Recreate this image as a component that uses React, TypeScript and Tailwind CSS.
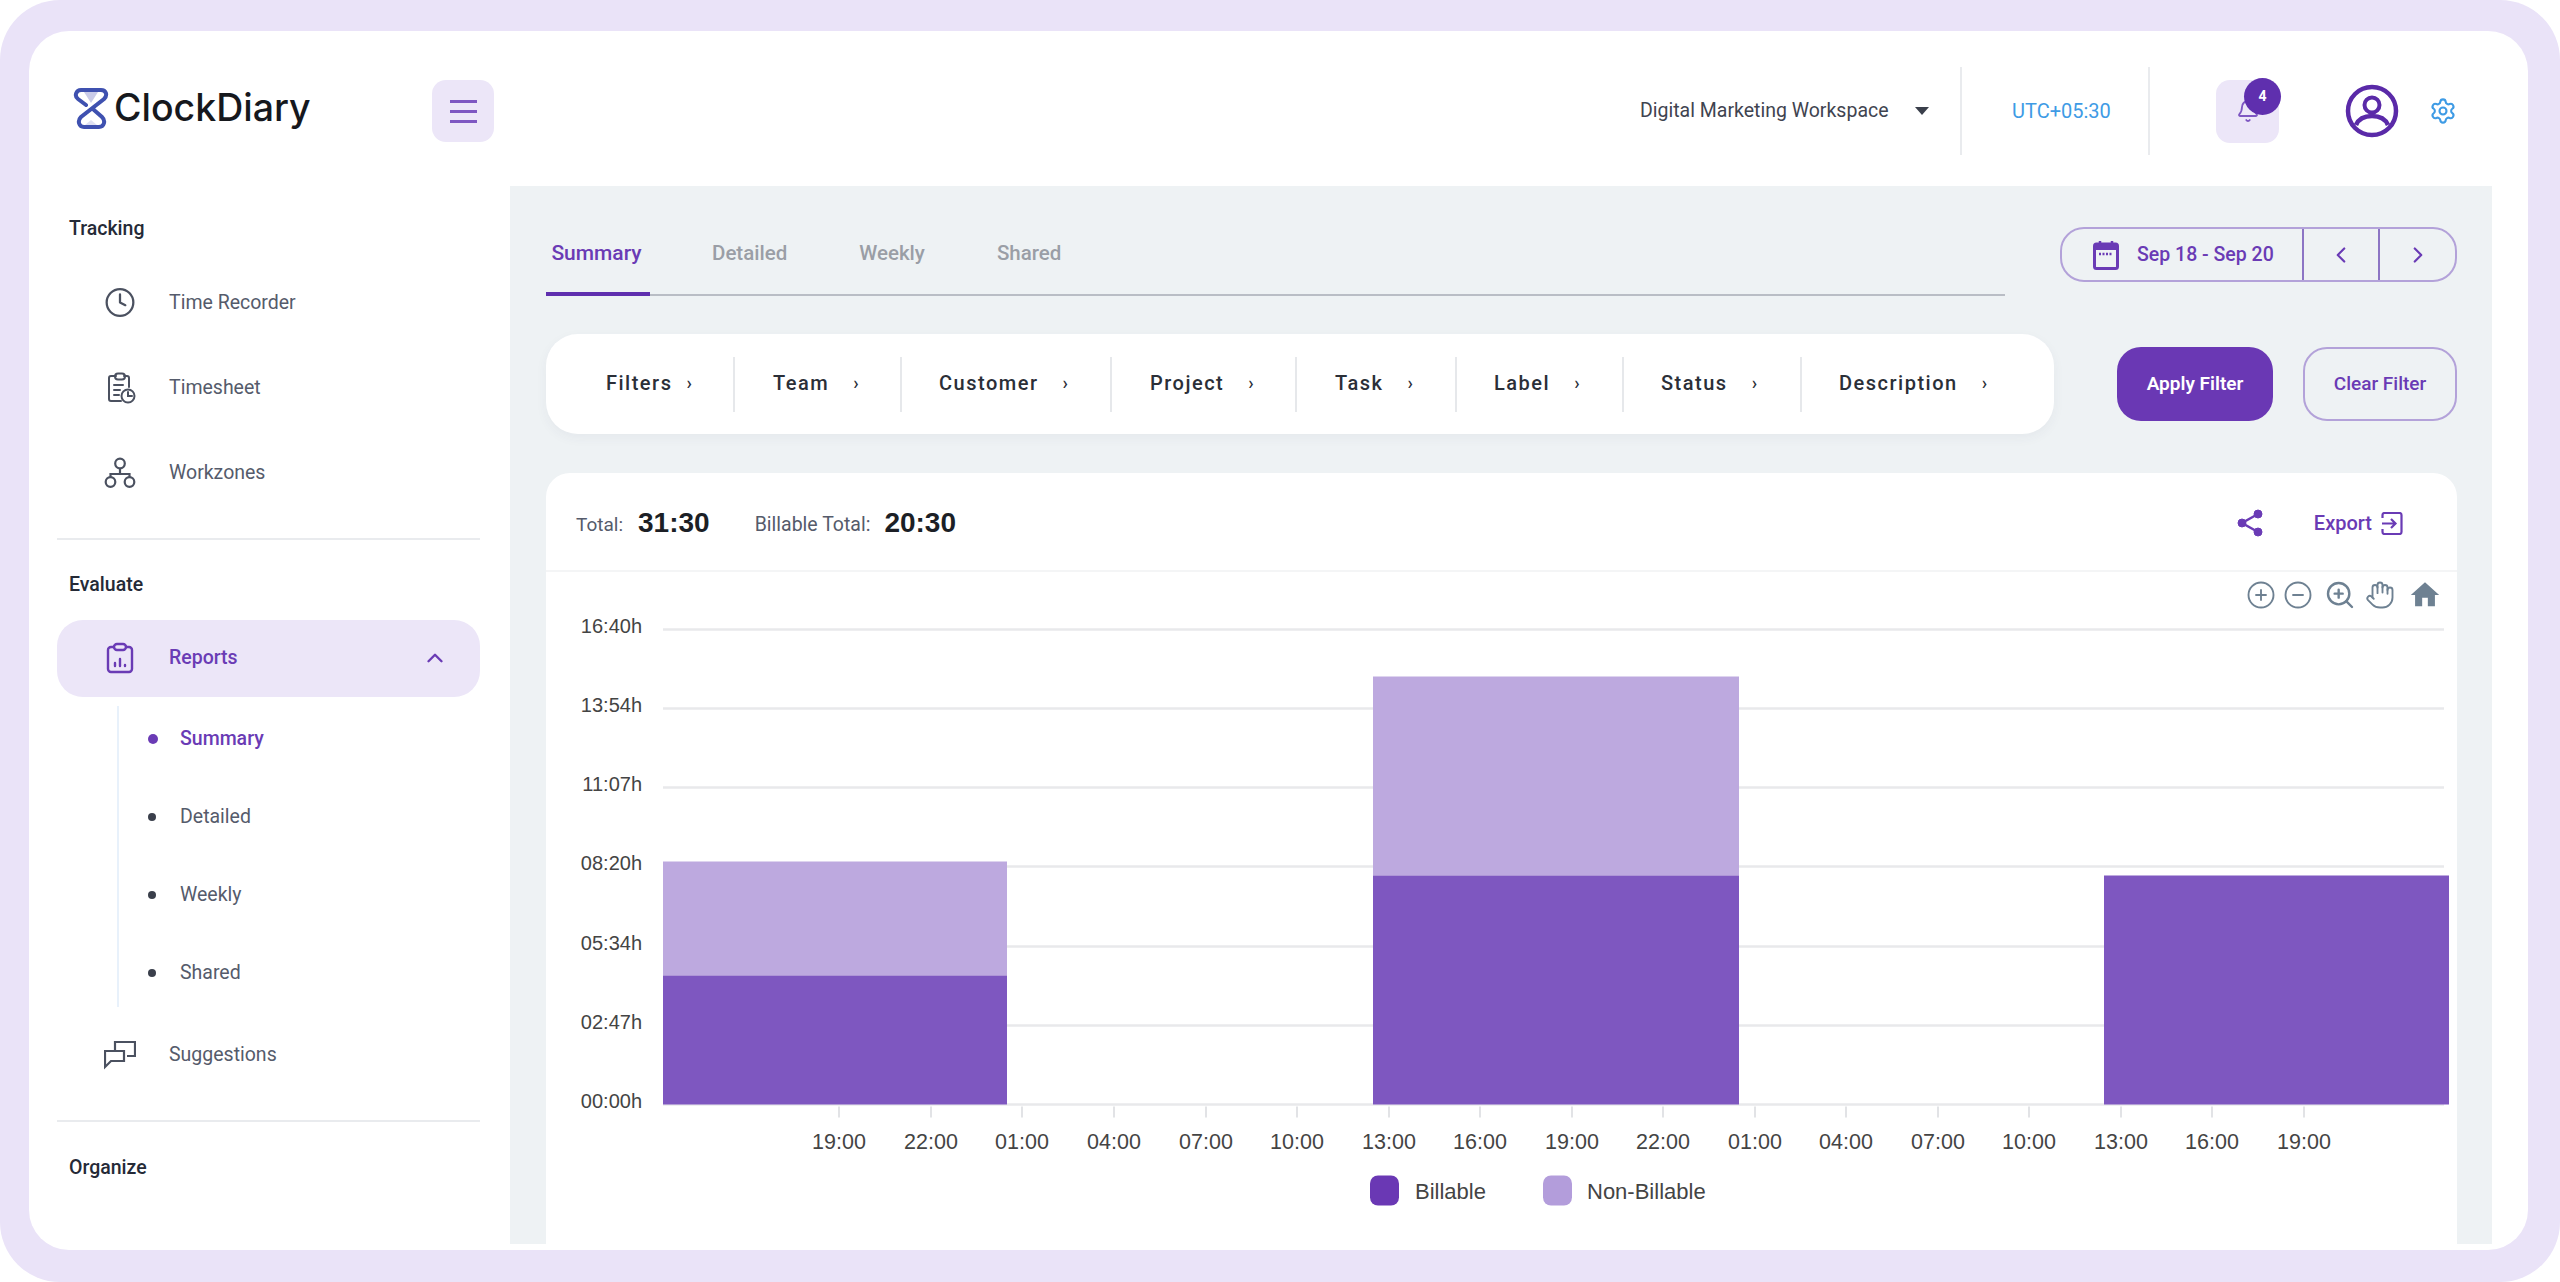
import React from "react";
import {
  Bell,
  ChevronLeft,
  ChevronRight,
  ChevronUp,
  CircleMinus,
  CirclePlus,
  Clock,
  Hand,
  Settings,
  ZoomIn,
} from "lucide-react";

const yLabels = [
  { label: "16:40h", y: 629 },
  { label: "13:54h", y: 708 },
  { label: "11:07h", y: 787 },
  { label: "08:20h", y: 866 },
  { label: "05:34h", y: 946 },
  { label: "02:47h", y: 1025 },
  { label: "00:00h", y: 1104 },
];

const xLabels = [
  { label: "19:00", x: 839 },
  { label: "22:00", x: 931 },
  { label: "01:00", x: 1022 },
  { label: "04:00", x: 1114 },
  { label: "07:00", x: 1206 },
  { label: "10:00", x: 1297 },
  { label: "13:00", x: 1389 },
  { label: "16:00", x: 1480 },
  { label: "19:00", x: 1572 },
  { label: "22:00", x: 1663 },
  { label: "01:00", x: 1755 },
  { label: "04:00", x: 1846 },
  { label: "07:00", x: 1938 },
  { label: "10:00", x: 2029 },
  { label: "13:00", x: 2121 },
  { label: "16:00", x: 2212 },
  { label: "19:00", x: 2304 },
];

const filters = [
  { label: "Filters", width: "w-[189px]", pad: "pl-[60px]", gap: "gap-[14px]" },
  { label: "Team", width: "w-[167px]", pad: "pl-[38px]", gap: "gap-[24px]" },
  { label: "Customer", width: "w-[210px]", pad: "pl-[37px]", gap: "gap-[24px]" },
  { label: "Project", width: "w-[185px]", pad: "pl-[38px]", gap: "gap-[24px]" },
  { label: "Task", width: "w-[160px]", pad: "pl-[38px]", gap: "gap-[24px]" },
  { label: "Label", width: "w-[167px]", pad: "pl-[37px]", gap: "gap-[24px]" },
  { label: "Status", width: "w-[178px]", pad: "pl-[37px]", gap: "gap-[24px]" },
  { label: "Description", width: "flex-1", pad: "pl-[37px]", gap: "gap-[24px]" },
];

function Logo() {
  return (
    <svg width="36" height="43" viewBox="0 0 36 43" fill="none">
      <path d="M11 5h14l-7 11z" fill="#c9cbe8" />
      <path d="M12 38h12l-6-5z" fill="#dfe0f2" />
      <path
        d="M8 3h20c5 0 7 5 3 9L8 30c-4 4-2 10 3 10h15c5 0 7-6 3-10l-8-7M8 3c-5 0-7 6-3 9l8 6"
        stroke="#3f51b0"
        strokeWidth="4"
        strokeLinecap="round"
      />
    </svg>
  );
}

function TimesheetIcon() {
  return (
    <svg width="32" height="32" viewBox="0 0 32 32" fill="none" stroke="#4b5160" strokeWidth="2" strokeLinecap="round">
      <path d="M12 4H7a2 2 0 0 0-2 2v21a2 2 0 0 0 2 2h10" />
      <path d="M20 4h3a2 2 0 0 1 2 2v9" />
      <rect x="11" y="1.5" width="10" height="6" rx="3" />
      <path d="M10 13h9M10 18h6M10 23h5" />
      <circle cx="24" cy="24" r="6.5" />
      <path d="M24 20v4h4" />
    </svg>
  );
}

function WorkzonesIcon() {
  return (
    <svg width="32" height="32" viewBox="0 0 32 32" fill="none" stroke="#4b5160" strokeWidth="2.200">
      <circle cx="16" cy="6.500" r="4.800" />
      <circle cx="6.500" cy="25" r="4.800" />
      <circle cx="25.500" cy="25" r="4.800" />
      <path d="M16 11.500v5.500M6.500 20v-3h19v3" />
    </svg>
  );
}

function ReportsIcon() {
  return (
    <svg width="28" height="32" viewBox="0 0 28 32" fill="none" stroke="#6a3bb5" strokeWidth="2.400" strokeLinecap="round">
      <path d="M8 5H5a3 3 0 0 0-3 3v19a3 3 0 0 0 3 3h18a3 3 0 0 0 3-3V8a3 3 0 0 0-3-3h-3" />
      <rect x="8" y="2" width="12" height="6" rx="3" />
      <path d="M9 24v-3M14 24v-7M19 24v-1" />
    </svg>
  );
}

function SuggestionsIcon() {
  return (
    <svg width="32" height="32" viewBox="0 0 32 32" fill="none" stroke="#4b5160" strokeWidth="2.200">
      <path d="M11 11V3h20v14h-8" />
      <path d="M1 12h19v10H7l-6 6z" />
    </svg>
  );
}

function CalendarIcon() {
  return (
    <svg width="26" height="30" viewBox="0 0 26 30" fill="none">
      <rect x="1.500" y="4" width="23" height="24.500" rx="2" stroke="#6a3bb5" strokeWidth="3" />
      <rect x="1.500" y="4" width="23" height="6" fill="#6a3bb5" />
      <path d="M7 1v5M19 1v5" stroke="#6a3bb5" strokeWidth="2.500" />
      <path d="M6 14h14" stroke="#6a3bb5" strokeWidth="2.500" strokeDasharray="2 1.500" />
    </svg>
  );
}

function ProfileIcon() {
  return (
    <svg width="54" height="54" viewBox="0 0 54 54" fill="none">
      <circle cx="27" cy="27" r="24" stroke="#5a2aa8" strokeWidth="4.500" />
      <circle cx="27" cy="21" r="7.500" stroke="#5a2aa8" strokeWidth="4" />
      <path d="M11 41c3-7 9-9 16-9s13 2 16 9" stroke="#5a2aa8" strokeWidth="4.500" />
    </svg>
  );
}

function ShareIcon() {
  return (
    <svg width="28" height="28" viewBox="0 0 28 28" fill="#6a3bb5" stroke="#6a3bb5">
      <circle cx="22" cy="5" r="4" />
      <circle cx="6" cy="14" r="4" />
      <circle cx="22" cy="23" r="4" />
      <path d="M22 5 6 14l16 9" fill="none" strokeWidth="2.500" />
    </svg>
  );
}

function ExportIcon() {
  return (
    <svg width="22" height="23" viewBox="0 0 22 23" fill="none" stroke="#6a3bb5" strokeWidth="2.200">
      <path d="M1.500 6V3a2 2 0 0 1 2-2h15a2 2 0 0 1 2 2v17a2 2 0 0 1-2 2h-15a2 2 0 0 1-2-2v-3" />
      <path d="M1 11.500h13M10 7l4.500 4.500L10 16" />
    </svg>
  );
}

function HomeIcon() {
  return (
    <svg width="34" height="34" viewBox="0 0 24 24" fill="#6e8192">
      <path d="M10 20v-6h4v6h5v-8h3L12 3 2 12h3v8z" />
    </svg>
  );
}

function NavRow({ icon, label }: { icon: React.ReactNode; label: string }) {
  return (
    <div className="flex h-[85px] items-center gap-[33px] pt-[3px] pl-[75px] text-[19.5px] text-[#555b6b]">
      <div className="flex w-[32px] justify-center">{icon}</div>
      {label}
    </div>
  );
}

function SubRow({ label, active }: { label: string; active?: boolean }) {
  return (
    <div className="flex h-[78px] items-center pt-[3px] pl-[29px]">
      <div className="flex w-[32px] items-center">
        <span className={active ? "h-[10px] w-[10px] rounded-full bg-[#6a3bb5]" : "h-[8px] w-[8px] rounded-full bg-[#3a3f4b]"} />
      </div>
      <span className={active ? "text-[19.5px] font-medium text-[#6a3bb5]" : "text-[19.5px] text-[#555b6b]"}>{label}</span>
    </div>
  );
}

function Sidebar() {
  return (
    <aside className="w-[481px] shrink-0 overflow-hidden">
      <div className="h-[72.5px] pt-[30px] pl-[40px] text-[19.5px] font-medium leading-[26px] text-[#252a37]">Tracking</div>
      <NavRow icon={<Clock size={33} strokeWidth={1.7} color="#4b5160" />} label="Time Recorder" />
      <NavRow icon={<TimesheetIcon />} label="Timesheet" />
      <NavRow icon={<WorkzonesIcon />} label="Workzones" />
      <div className="mt-[24.5px] ml-[28px] h-[2px] w-[423px] bg-[#e9ebee]" />
      <div className="h-[79.5px] pt-[32px] pl-[40px] text-[19.5px] font-medium leading-[26px] text-[#252a37]">Evaluate</div>
      <div className="ml-[28px] flex h-[77px] w-[423px] items-center rounded-[26px] bg-[#ece6f8] pl-[47px] text-[19.5px] font-medium text-[#6a3bb5]">
        <div className="flex w-[32px] justify-center">
          <ReportsIcon />
        </div>
        <span className="ml-[33px]">Reports</span>
        <ChevronUp size={26} strokeWidth={2.2} className="ml-auto mr-[32px]" />
      </div>
      <div className="mt-[9px] ml-[88px] flex h-[301px] flex-col border-l-2 border-[#e8f1fb]">
        <div className="-mt-[7px]">
          <SubRow label="Summary" active />
          <SubRow label="Detailed" />
          <SubRow label="Weekly" />
          <SubRow label="Shared" />
        </div>
      </div>
      <div className="mt-[4px]">
        <NavRow icon={<SuggestionsIcon />} label="Suggestions" />
      </div>
      <div className="mt-[24px] ml-[28px] h-[2px] w-[423px] bg-[#e9ebee]" />
      <div className="flex h-[92px] items-center pl-[40px] text-[19.5px] font-medium text-[#252a37]">Organize</div>
    </aside>
  );
}

function Header() {
  return (
    <header className="flex h-[155px] shrink-0 items-center pt-[5px] pr-[71px]">
      <div className="ml-[44px] flex w-[359px] items-center gap-[5px] pb-[6px]">
        <Logo />
        <span className="font-['Inter',sans-serif] text-[37.5px] font-medium leading-none text-[#16181d]">ClockDiary</span>
      </div>
      <button className="flex h-[62px] w-[62px] flex-col items-center justify-center gap-[7px] rounded-[14px] bg-[#ece6f8]">
        <span className="h-[3px] w-[27px] bg-[#7e57c2]" />
        <span className="h-[3px] w-[27px] bg-[#7e57c2]" />
        <span className="h-[3px] w-[27px] bg-[#7e57c2]" />
      </button>
      <div className="ml-auto flex items-center">
        <span className="w-[250px] whitespace-nowrap text-[19.5px] text-[#3f4450]">Digital Marketing Workspace</span>
        <span className="ml-[25px] h-0 w-0 border-x-[7px] border-t-[8px] border-x-transparent border-t-[#3a3f4b]" />
        <div className="ml-[31px] h-[88px] w-[2px] bg-[#e9ebee]" />
        <span className="ml-[50px] w-[100px] text-[20px] text-[#3e9be5]">UTC+05:30</span>
        <div className="ml-[36px] h-[88px] w-[2px] bg-[#e9ebee]" />
        <div className="relative ml-[66px] flex h-[63px] w-[63px] items-center justify-center rounded-[14px] bg-[#ece6f8]">
          <Bell size={24} color="#7e57c2" strokeWidth={1.8} />
          <span className="absolute -top-[2px] right-[-2px] flex h-[37px] w-[37px] items-center justify-center rounded-full bg-[#5f2fae] text-[14px] font-bold text-white">4</span>
        </div>
        <div className="ml-[66px]">
          <ProfileIcon />
        </div>
        <Settings className="ml-[30px]" size={28} strokeWidth={1.8} color="#3e9be5" />
      </div>
    </header>
  );
}

function TabsRow() {
  return (
    <div className="flex items-start justify-between pr-[35px] pl-[36px]">
      <div className="mt-[41px] flex h-[69px] w-[1459px] border-b-2 border-[#b9bdc5] text-[20.5px] font-medium">
        <div className="-mb-[2px] flex h-[69px] w-[104px] items-start justify-center border-b-[4px] border-[#5f2fae] pt-[11px] pr-[3px] text-[21px] text-[#6a3bb5]">Summary</div>
        <div className="ml-[62px] pt-[11px] text-[#9a9ea6]">Detailed</div>
        <div className="ml-[72px] pt-[11px] text-[#9a9ea6]">Weekly</div>
        <div className="ml-[72px] pt-[11px] text-[#9a9ea6]">Shared</div>
      </div>
      <div className="mt-[41px] flex h-[55px] w-[397px] items-center rounded-[24px] border-2 border-[#b3a2d9] text-[#6a3bb5]">
        <div className="flex h-full w-[242px] items-center gap-[18px] border-r-2 border-[#8c75c4] pl-[31px] text-[19.5px] font-medium">
          <CalendarIcon />
          Sep 18 - Sep 20
        </div>
        <div className="flex h-full w-[76px] items-center justify-center border-r-2 border-[#8c75c4]">
          <ChevronLeft size={26} strokeWidth={2} />
        </div>
        <div className="flex h-full flex-1 items-center justify-center">
          <ChevronRight size={26} strokeWidth={2} />
        </div>
      </div>
    </div>
  );
}

function FilterBar() {
  return (
    <div className="mt-[38px] flex items-start pr-[35px] pl-[36px]">
      <div className="flex h-[100px] w-[1508px] items-center rounded-[32px] bg-white shadow-[0_4px_12px_rgba(60,60,90,0.05)]">
        {filters.map((item, index) => (
          <div
            key={item.label}
            className={`${item.width} ${item.pad} ${item.gap} flex h-[55px] items-center pb-[2px] ${index < filters.length - 1 ? "border-r-2 border-[#e6e8eb]" : ""} text-[20px] font-medium tracking-[1.5px] text-[#2b2f38]`}
          >
            {item.label}
            <span className="text-[18px] leading-none">›</span>
          </div>
        ))}
      </div>
      <button className="mt-[13px] ml-[63px] h-[74px] w-[156px] rounded-[24px] bg-[#6a38b4] text-[19px] font-semibold text-white">Apply Filter</button>
      <button className="mt-[13px] ml-[30px] h-[74px] w-[154px] rounded-[24px] border-2 border-[#b3a2d9] text-[19px] font-medium text-[#6a3bb5]">Clear Filter</button>
    </div>
  );
}

function Chart() {
  return (
    <svg width="1911" height="677" viewBox="546 571.500 1911 677" className="block">
      {yLabels.map((row) => (
        <g key={row.label}>
          <line x1="663" x2="2444" y1={row.y} y2={row.y} stroke="#e8e9eb" strokeWidth="2.500" />
          <text x="642" y={row.y + 3} textAnchor="end" fontFamily="Liberation Sans, Arial, sans-serif" fontSize="20" fill="#444">
            {row.label}
          </text>
        </g>
      ))}
      {xLabels.map((tick) => (
        <g key={`${tick.label}-${tick.x}`}>
          <line x1={tick.x} x2={tick.x} y1="1106" y2="1117" stroke="#e2e3e6" strokeWidth="2" />
          <text x={tick.x} y="1148" textAnchor="middle" fontFamily="Liberation Sans, Arial, sans-serif" fontSize="21.500" fill="#444">
            {tick.label}
          </text>
        </g>
      ))}
      <rect x="663" y="861" width="344" height="114" fill="#bda9df" />
      <rect x="663" y="975" width="344" height="129" fill="#7e57c0" />
      <rect x="1373" y="676" width="366" height="199" fill="#bda9df" />
      <rect x="1373" y="875" width="366" height="229" fill="#7e57c0" />
      <rect x="2104" y="875" width="345" height="229" fill="#7e57c0" />
      <rect x="1370" y="1175" width="29" height="30" rx="8" fill="#6a38b4" />
      <text x="1415" y="1198" fontFamily="Liberation Sans, Arial, sans-serif" fontSize="22" fill="#444">Billable</text>
      <rect x="1543" y="1175" width="29" height="30" rx="8" fill="#b39ddb" />
      <text x="1587" y="1198" fontFamily="Liberation Sans, Arial, sans-serif" fontSize="22" fill="#444">Non-Billable</text>
    </svg>
  );
}

function ChartCard() {
  return (
    <div className="mt-[39px] ml-[36px] h-[777px] w-[1911px] rounded-t-[24px] bg-white">
      <div className="flex h-[99px] items-center border-b-2 border-[#f4f5f6] pt-[3px] pr-[54px] pl-[30px]">
        <span className="pt-[4px] text-[19px] text-[#555b6b]">Total:</span>
        <span className="ml-[15px] font-['Liberation_Sans',sans-serif] text-[28px] font-bold text-[#1c1f26]">31:30</span>
        <span className="ml-[45px] pt-[4px] text-[19.5px] text-[#555b6b]">Billable Total:</span>
        <span className="ml-[14px] font-['Liberation_Sans',sans-serif] text-[28px] font-bold text-[#1c1f26]">20:30</span>
        <div className="ml-auto flex items-center">
          <ShareIcon />
          <span className="ml-[50px] text-[20px] font-medium text-[#6a3bb5]">Export</span>
          <span className="ml-[9px]">
            <ExportIcon />
          </span>
        </div>
      </div>
      <div className="relative">
        <Chart />
        <div className="absolute top-[6px] right-[15px] flex items-center text-[#6e8192]">
          <CirclePlus size={30} strokeWidth={1.5} />
          <CircleMinus size={30} strokeWidth={1.5} className="ml-[7px]" />
          <ZoomIn size={32} strokeWidth={1.8} className="ml-[11px]" />
          <Hand size={30} strokeWidth={1.5} className="ml-[9px]" />
          <span className="ml-[13px]">
            <HomeIcon />
          </span>
        </div>
      </div>
    </div>
  );
}

export default function App() {
  return (
    <div className="h-[1282px] w-[2560px] overflow-hidden bg-white font-['Roboto',sans-serif]">
      <div className="h-[1282px] rounded-[60px] bg-[#eae3f8] pt-[31px] pr-[32px] pb-[32px] pl-[29px]">
        <div className="flex h-[1219px] flex-col overflow-hidden rounded-[40px] bg-white">
          <Header />
          <div className="flex flex-1">
            <Sidebar />
            <main className="h-[1058px] w-[1982px] shrink-0 bg-[#eef2f4]">
              <TabsRow />
              <FilterBar />
              <ChartCard />
            </main>
          </div>
        </div>
      </div>
    </div>
  );
}
